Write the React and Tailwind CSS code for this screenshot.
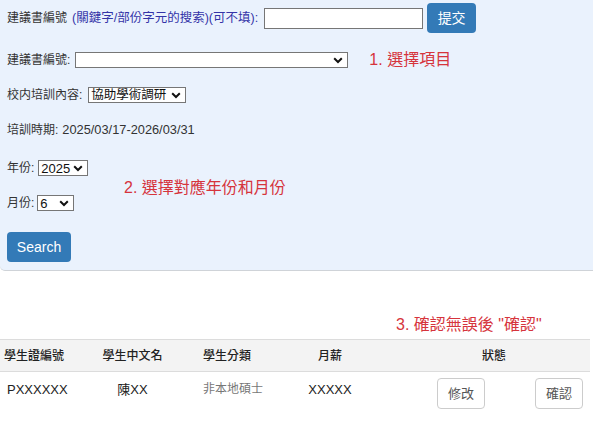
import React from "react";

function Chevron({ className = "" }) {
  return (
    <svg width="10" height="7" viewBox="0 0 10 7" className={className}>
      <path d="M1.2 1.3 L5 5 L8.8 1.3" fill="none" stroke="#111" strokeWidth="2" />
    </svg>
  );
}

function FakeSelect({ width, value, className = "", textClass = "text-[13px]" }) {
  return (
    <div
      className={`flex h-[16px] items-center justify-between overflow-hidden whitespace-nowrap border border-[#767676] bg-white pl-[2px] pr-[4px] leading-none text-[#111] ${textClass} ${className}`}
      style={{ width }}
    >
      <span>{value}</span>
      <Chevron className="shrink-0" />
    </div>
  );
}

export default function App() {
  return (
    <div className="relative h-[425px] w-[593px] overflow-hidden bg-white font-['Liberation_Sans','Noto_Sans_CJK_TC',sans-serif] text-[12px] text-[#333]">
      {/* Search panel */}
      <div className="relative rounded-bl-[5px] border-b border-[#cfd3d8] bg-[#eaf2fd] px-[7px] pb-[8px] pt-[3px]">
        <div className="flex h-[30px] items-center whitespace-nowrap">
          <span>建議書編號</span>
          <span className="ml-[5px] text-[12.5px] text-[#3434a8]">(關鍵字/部份字元的搜索)(可不填):</span>
          <div className="ml-[6px] h-[21px] w-[159px] border border-[#767676] bg-white" />
          <button className="ml-[4px] h-[30px] w-[49px] rounded-[4px] bg-[#337ab7] text-[14px] text-white">
            提交
          </button>
        </div>

        <div className="mt-[12px] flex h-[30px] items-center">
          <span>建議書編號:</span>
          <FakeSelect width={273} value="" className="ml-[5px]" />
          <span className="ml-[21px] text-[16px] text-[#d6343c]">1. 選擇項目</span>
        </div>

        <div className="mt-[5px] flex h-[30px] items-center">
          <span>校内培訓內容:</span>
          <FakeSelect width={98} value="協助學術調研" className="ml-[6px]" textClass="text-[12.5px]" />
        </div>

        <div className="mt-[5px] flex h-[30px] items-center">
          <span>培訓時期:</span>
          <span className="ml-[4px] text-[12.8px]">2025/03/17-2026/03/31</span>
        </div>

        <div className="mt-[8px] flex h-[30px] items-center">
          <span>年份:</span>
          <FakeSelect width={50} value="2025" className="ml-[4px]" />
        </div>

        <div className="mt-[5px] flex h-[30px] items-center">
          <span>月份:</span>
          <FakeSelect width={37} value="6" className="ml-[3px]" />
        </div>

        <div className="mt-[14px] flex">
          <button className="h-[30px] w-[64px] rounded-[4px] bg-[#337ab7] text-[14px] text-white">
            Search
          </button>
        </div>

        <span className="absolute left-[124px] top-[176px] text-[16px] text-[#d6343c]">
          2. 選擇對應年份和月份
        </span>
      </div>

      {/* Annotation 3 */}
      <div className="mt-[44px] pl-[396px] text-[16px] leading-[20px] text-[#d6343c]">
        3. 確認無誤後 "確認"
      </div>

      {/* Table */}
      <div className="mt-[4px] w-[590px] text-[#222]">
        <div className="flex h-[33px] items-center whitespace-nowrap border-y border-[#dcdcdc] bg-[#f3f3f3] text-[12px] font-medium">
          <div className="w-[100px] pl-[4px]">學生證編號</div>
          <div className="w-[65px] text-center">學生中文名</div>
          <div className="w-[97px] pl-[38px]">學生分類</div>
          <div className="w-[136px] text-center">月薪</div>
          <div className="w-[192px] text-center">狀態</div>
        </div>
        <div className="flex h-[48px] items-start whitespace-nowrap text-[13px]">
          <div className="w-[100px] pl-[7px] pt-[8px]">PXXXXXX</div>
          <div className="w-[65px] pt-[8px] text-center">陳XX</div>
          <div className="w-[97px] pl-[38px] pt-[8px] text-[12px] text-[#777]">非本地碩士</div>
          <div className="w-[136px] pt-[8px] text-center">XXXXX</div>
          <div className="flex w-[192px] justify-between pl-[39px] pr-[7px] pt-[6px]">
            <button className="h-[31px] w-[48px] rounded-[4px] border border-[#cccccc] bg-white text-[13px] text-[#555]">
              修改
            </button>
            <button className="h-[31px] w-[48px] rounded-[4px] border border-[#cccccc] bg-white text-[13px] text-[#555]">
              確認
            </button>
          </div>
        </div>
      </div>
    </div>
  );
}
